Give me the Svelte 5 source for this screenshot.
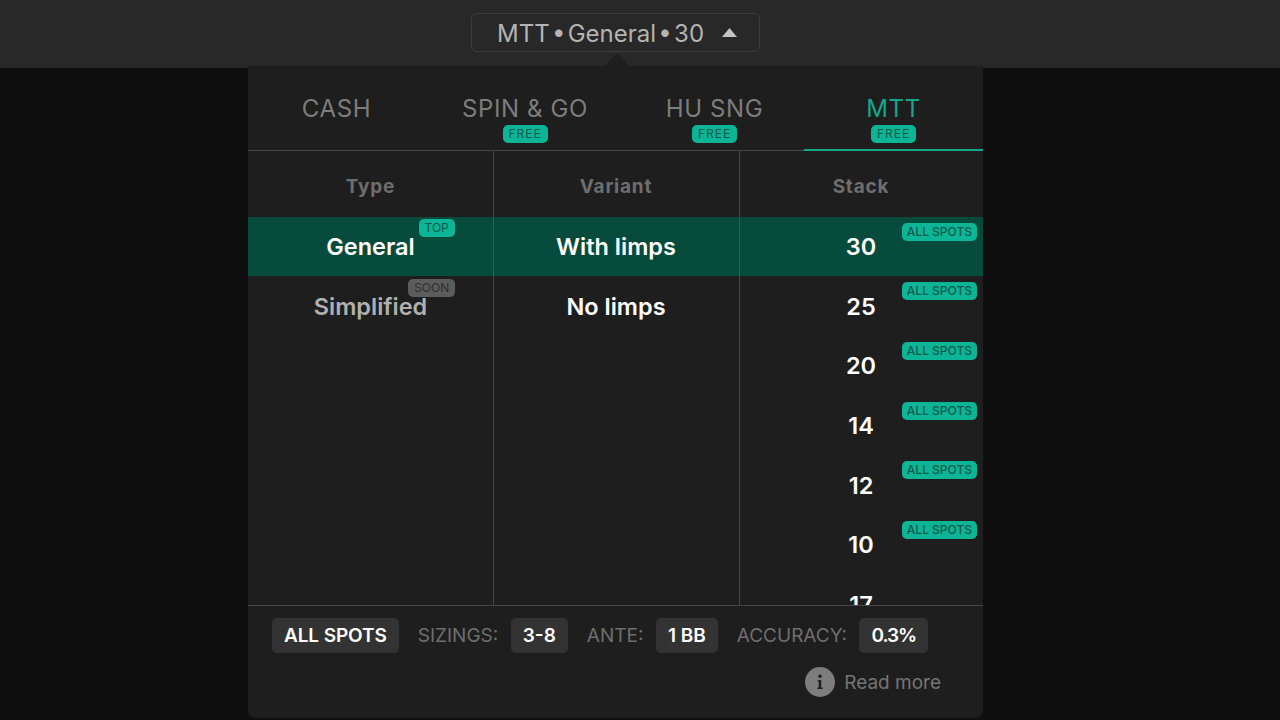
<script lang="ts">
  const tabs = [
    { label: 'CASH', free: false },
    { label: 'SPIN & GO', free: true },
    { label: 'HU SNG', free: true },
    { label: 'MTT', free: true, active: true }
  ];
  const stacks = [30, 25, 20, 14, 12, 10, 17];
  const chips = [
    { label: 'SIZINGS:', value: '3-8' },
    { label: 'ANTE:', value: '1 BB' },
    { label: 'ACCURACY:', value: '0.3%' }
  ];
</script>

<div class="page">
  <header class="topbar">
    <button type="button" class="picker">
      <span>MTT • General • 30</span>
      <svg width="15" height="9" viewBox="0 0 15 9" aria-hidden="true"><path d="M7.5 0 15 9H0z" fill="#c4c4c4" /></svg>
    </button>
  </header>

  <section class="panel">
    <span class="notch"></span>
    <nav class="tabs">
      {#each tabs as tab}
        <div class="tab" class:active={tab.active}>
          <span class="tab-label">{tab.label}</span>
          {#if tab.free}<span class="badge free">FREE</span>{/if}
        </div>
      {/each}
    </nav>

    <div class="columns">
      <div class="column">
        <h3>Type</h3>
        <div class="row selected">
          <span class="cell">General<span class="badge tag">TOP</span></span>
        </div>
        <div class="row">
          <span class="cell muted">Simplified<span class="badge tag soon">SOON</span></span>
        </div>
      </div>
      <div class="column">
        <h3>Variant</h3>
        <div class="row selected"><span class="cell">With limps</span></div>
        <div class="row"><span class="cell">No limps</span></div>
      </div>
      <div class="column">
        <h3>Stack</h3>
        {#each stacks as stack, i}
          <div class="row" class:selected={i === 0}>
            <span class="cell">{stack}</span>
            {#if i < 6}<span class="badge spots">ALL SPOTS</span>{/if}
          </div>
        {/each}
      </div>
    </div>

    <footer class="footer">
      <div class="facts">
        <span class="chip">ALL SPOTS</span>
        {#each chips as chip}
          <span class="fact">{chip.label}</span>
          <span class="chip">{chip.value}</span>
        {/each}
      </div>
      <a class="more" href="#more">
        <svg width="30" height="30" viewBox="0 0 30 30" aria-hidden="true">
          <circle cx="15" cy="15" r="15" fill="#7d7d7d" />
          <circle cx="15" cy="9.2" r="1.8" fill="#1e1e1e" />
          <path d="M12.8 13h3.4v7.6h1.4V22h-5.2v-1.4h1.3v-6.2h-.9z" fill="#1e1e1e" />
        </svg>
        Read more
      </a>
    </footer>
  </section>
</div>

<style>
  :global(body) {
    margin: 0;
    background: #0f0f0f;
    font-family: Inter, "Liberation Sans", sans-serif;
  }

  .page {
    display: flex;
    flex-direction: column;
    height: 720px;
    overflow: hidden;
  }

  .topbar {
    display: flex;
    justify-content: center;
    box-sizing: border-box;
    width: 100%;
    height: 68px;
    padding: 13px 49px 0 0;
    background: #282828;
  }

  .picker {
    display: flex;
    align-items: center;
    gap: 18px;
    box-sizing: border-box;
    width: 289px;
    height: 39px;
    padding: 1px 0 0 25px;
    border: 1px solid #3d3d3d;
    border-radius: 6px;
    background: transparent;
    color: #b4b4b4;
    font: inherit;
    font-size: 24px;
    word-spacing: -4.5px;
    white-space: nowrap;
  }

  .picker svg {
    flex: none;
    margin-bottom: 2px;
  }

  .panel {
    position: relative;
    display: flex;
    flex-direction: column;
    flex: none;
    box-sizing: border-box;
    align-self: center;
    width: 735px;
    height: 652px;
    margin: -2px 49px 0 0;
    border-radius: 0 0 8px 8px;
    background: #1e1e1e;
  }

  .notch {
    position: absolute;
    top: -13px;
    left: 357px;
    border-right: 12px solid transparent;
    border-bottom: 13px solid #1e1e1e;
    border-left: 12px solid transparent;
  }

  .tabs {
    display: grid;
    grid-template-columns: 177px 200px 179px 179px;
    flex: none;
    box-sizing: border-box;
    height: 85px;
    border-bottom: 1px solid #464646;
  }

  .tab {
    position: relative;
    display: flex;
    flex-direction: column;
    align-items: center;
    padding-top: 29px;
    color: #7d7d7d;
    font-size: 24px;
    line-height: 28px;
    letter-spacing: 0.6px;
  }

  .tab.active {
    margin-bottom: -1px;
    border-bottom: 2px solid #14a78c;
    color: #14a78c;
  }

  .tab-label {
    height: 30px;
  }

  .badge {
    border-radius: 5px;
    background: #0cb596;
    color: #0b5a4b;
    font-size: 12px;
    letter-spacing: 0;
    line-height: 18px;
    white-space: nowrap;
  }

  .free {
    width: 45px;
    text-align: center;
    letter-spacing: 1px;
  }

  .columns {
    display: grid;
    grid-template-columns: 245px 246px 244px;
    flex: none;
    box-sizing: border-box;
    height: 455px;
    overflow: hidden;
    border-bottom: 1px solid #464646;
  }

  .column {
    display: flex;
    flex-direction: column;
    min-width: 0;
    overflow: hidden;
  }

  .column + .column {
    box-shadow: inset 1px 0 0 #464646;
  }

  .column + .column .row {
    box-shadow: inset 1px 0 0 #464646;
  }

  .column + .column .row.selected {
    box-shadow: inset 1px 0 0 #2b6154;
  }

  h3 {
    flex: none;
    height: 65.5px;
    margin: 0;
    color: #6e6e6e;
    font-size: 19px;
    font-weight: 700;
    line-height: 71px;
    letter-spacing: 0.8px;
    text-align: center;
  }

  .row {
    position: relative;
    display: flex;
    justify-content: center;
    align-items: center;
    flex: none;
    box-sizing: border-box;
    height: 59.7px;
    color: #fff;
    font-size: 23.5px;
    font-weight: 600;
  }

  .row.selected {
    background: #074b3c;
  }

  .cell {
    position: relative;
  }

  .muted {
    color: #b0b0b0;
  }

  .tag {
    position: absolute;
    top: -13px;
    right: -40px;
    padding: 0 6px;
    font-weight: 400;
  }

  .soon {
    top: -13px;
    right: -28px;
    background: #5c5c5c;
    color: #2f2f2f;
  }

  .spots {
    position: absolute;
    top: 6px;
    right: 6px;
    padding: 0 5px;
    font-weight: 500;
  }

  .footer {
    display: flex;
    flex-direction: column;
    align-items: flex-end;
    gap: 14px;
    padding: 12px 42px 0 24px;
  }

  .facts {
    display: flex;
    align-items: center;
    align-self: flex-start;
    white-space: nowrap;
  }

  .fact {
    margin: 0 12.5px 0 19px;
    color: #6e6e6e;
    font-size: 19px;
  }

  .chip {
    box-sizing: border-box;
    height: 35px;
    padding: 0 12px;
    border-radius: 5px;
    background: #333;
    color: #fff;
    font-size: 19px;
    font-weight: 600;
    line-height: 35px;
  }

  .chip:first-child {
    letter-spacing: -0.1px;
  }

  .chip:last-child {
    letter-spacing: -1px;
  }

  .more {
    display: flex;
    align-items: center;
    gap: 9px;
    color: #757575;
    font-size: 19px;
    text-decoration: none;
  }
</style>
